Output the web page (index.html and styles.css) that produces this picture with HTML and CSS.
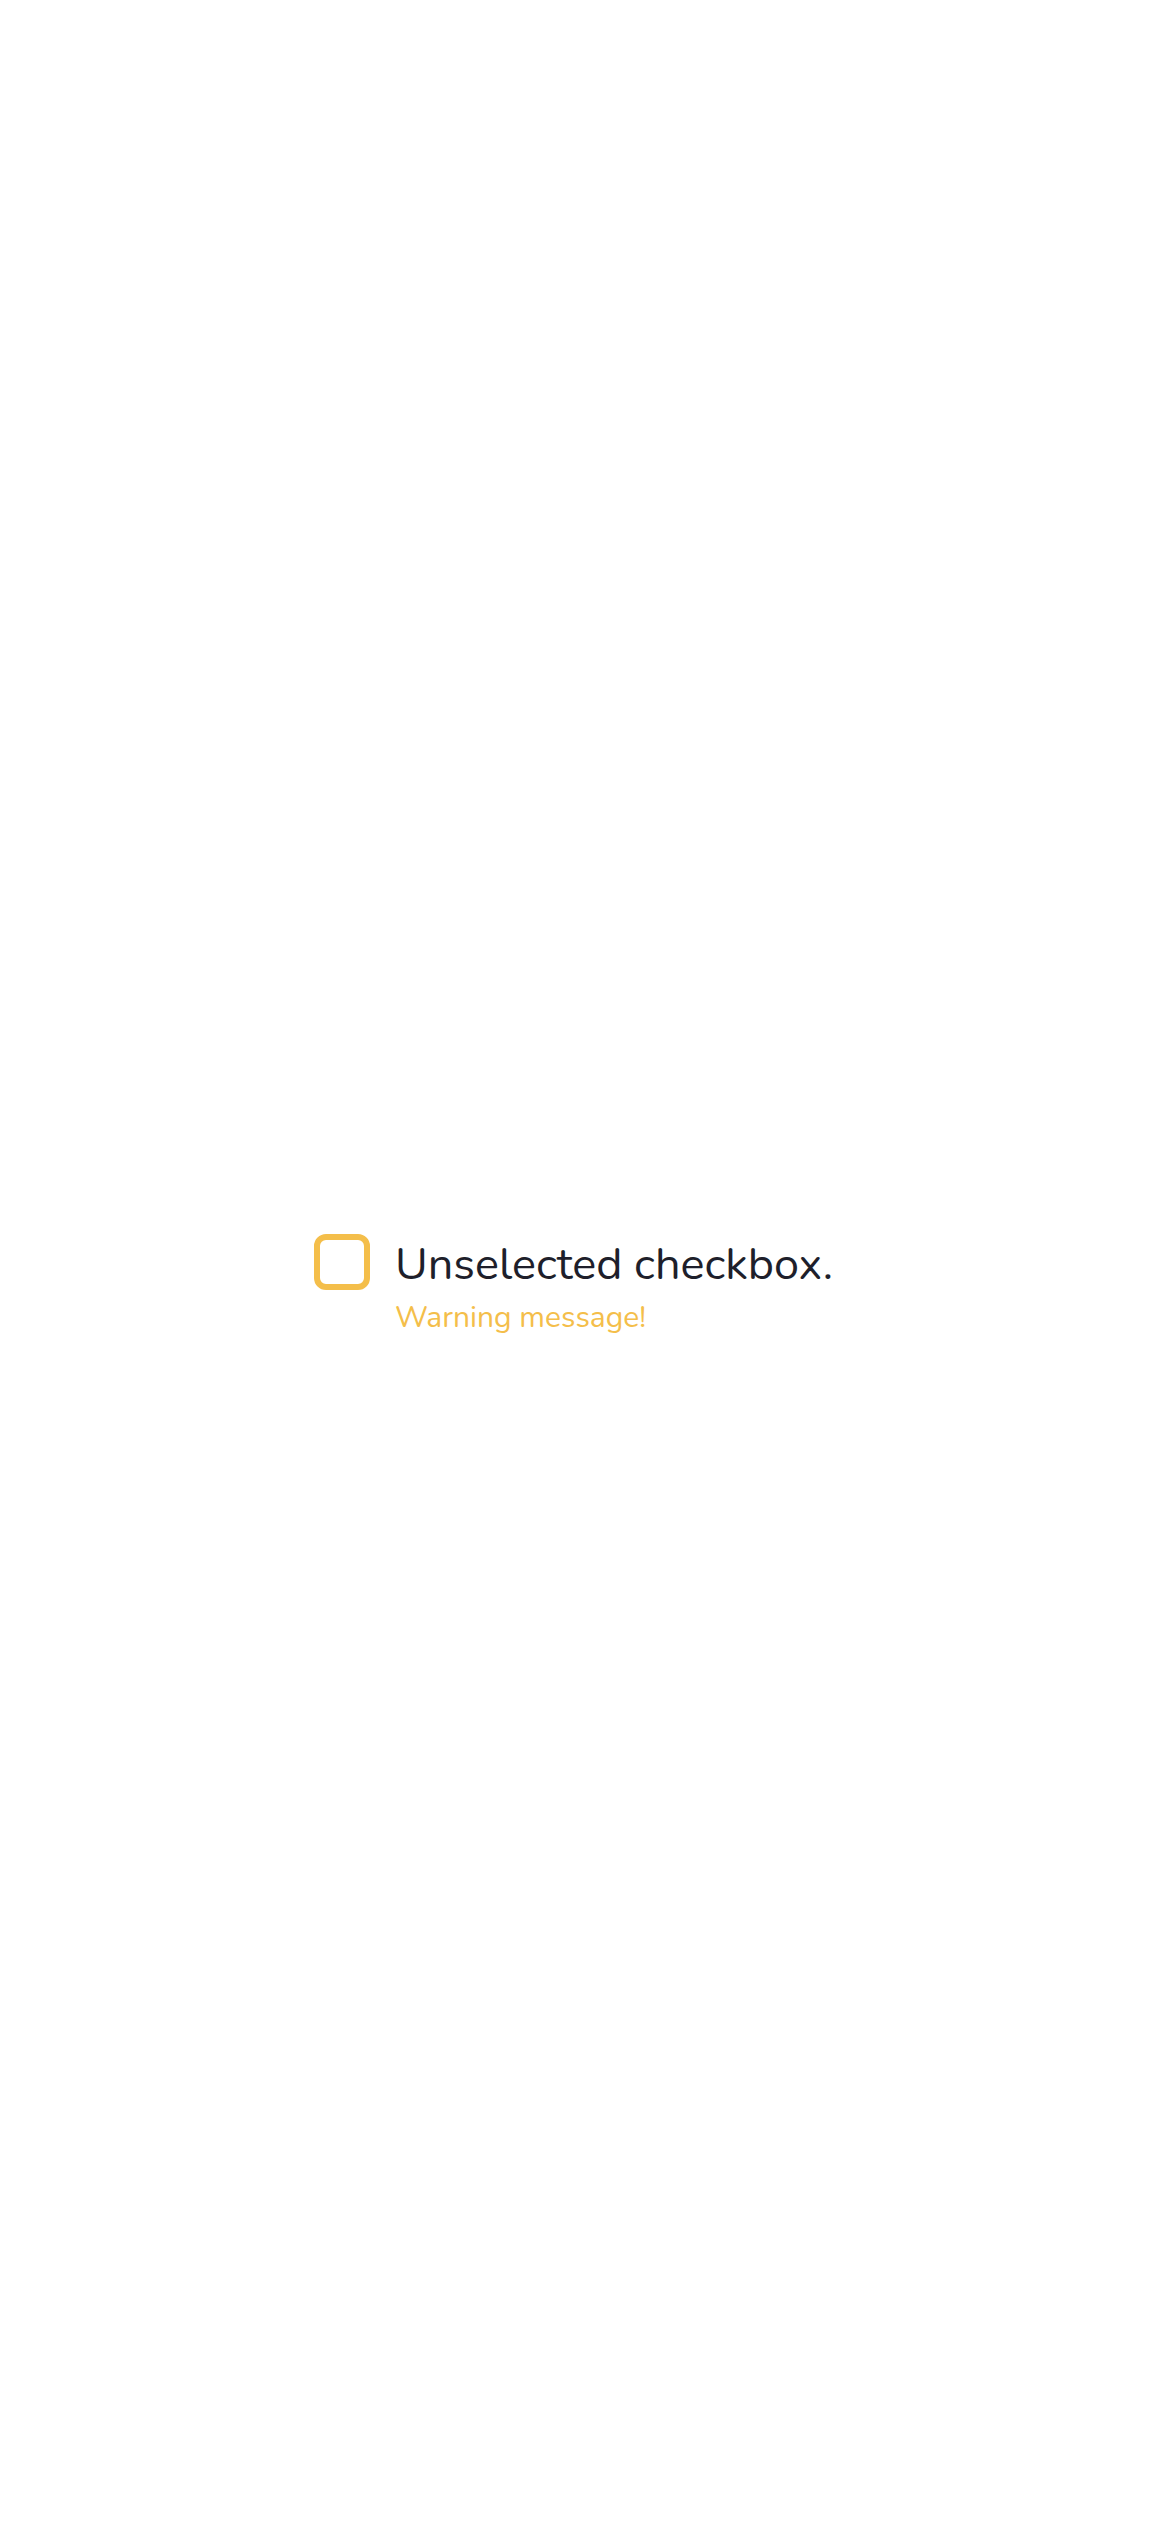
FILE: index.html
```html
<!DOCTYPE html>
<html>
<head>
<meta charset="utf-8">
<link rel="stylesheet" href="styles.css">
</head>
<body>
<main class="page">
  <div class="field">
    <div class="checkbox" role="checkbox" aria-checked="false"></div>
    <div class="texts">
      <div class="label">Unselected checkbox.</div>
      <div class="warning">Warning message!</div>
    </div>
  </div>
</main>
</body>
</html>
```
FILE: styles.css
```css
html, body {
  margin: 0;
  padding: 0;
  background: #ffffff;
}
.page {
  width: 1170px;
  height: 2532px;
  box-sizing: border-box;
  padding-top: 1234px;
  padding-left: 314px;
}
.field {
  display: flex;
  align-items: flex-start;
  gap: 25px;
}
.checkbox {
  width: 56px;
  height: 56px;
  box-sizing: border-box;
  border: 6px solid #F4BE4A;
  border-radius: 12px;
  flex: none;
}
.texts {
  display: flex;
  flex-direction: column;
  padding-top: 3px;
  font-family: "Nunito", "Lato", "Noto Sans", sans-serif;
}
.label {
  font-size: 45px;
  line-height: 56px;
  color: #1E1F2B;
}
.warning {
  font-size: 30px;
  line-height: 40px;
  color: #F4BE4A;
  margin-top: 5px;
}
```
